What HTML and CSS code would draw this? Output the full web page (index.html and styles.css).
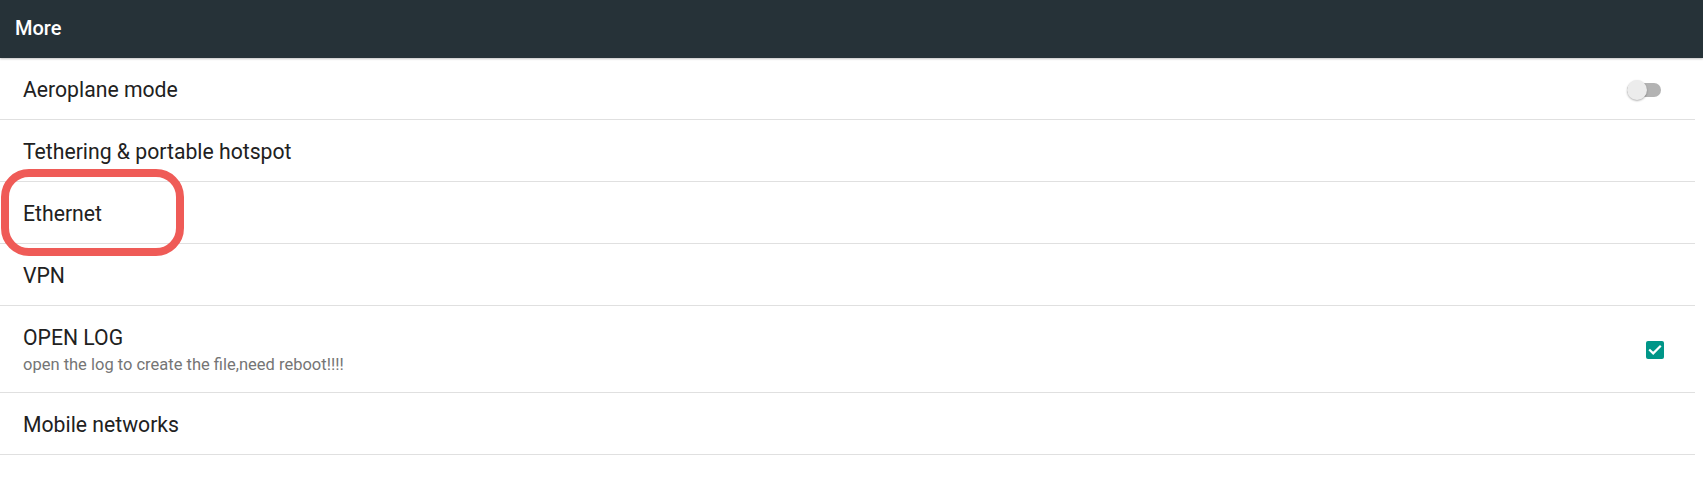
FILE: index.html
```html
<!DOCTYPE html>
<html>
<head>
<meta charset="utf-8">
<link rel="stylesheet" href="styles.css">
</head>
<body>
<header class="appbar"><span class="appbar-title">More</span></header>
<main class="list">
  <div class="row">
    <div class="row-text"><div class="title">Aeroplane mode</div></div>
    <div class="switch"><span class="switch-track"></span><span class="switch-thumb"></span></div>
  </div>
  <div class="row">
    <div class="row-text"><div class="title">Tethering &amp; portable hotspot</div></div>
  </div>
  <div class="row">
    <div class="row-text"><div class="title">Ethernet</div></div>
  </div>
  <div class="row">
    <div class="row-text"><div class="title">VPN</div></div>
  </div>
  <div class="row row-tall">
    <div class="row-text">
      <div class="title">OPEN LOG</div>
      <div class="summary">open the log to create the file,need reboot!!!!</div>
    </div>
    <div class="checkbox">
      <svg viewBox="0 0 18 18" width="18" height="18"><path d="M4 9.3l3.2 3.1L14 5.6" fill="none" stroke="#fff" stroke-width="2.2" stroke-linecap="square"/></svg>
    </div>
  </div>
  <div class="row">
    <div class="row-text"><div class="title">Mobile networks</div></div>
  </div>
</main>
<div class="highlight"></div>
</body>
</html>
```

FILE: styles.css
```css
html, body {
  margin: 0;
  padding: 0;
  background: #ffffff;
}
body {
  position: relative;
  width: 1703px;
  height: 498px;
  overflow: hidden;
  font-family: Roboto, "Noto Sans", "Liberation Sans", sans-serif;
}
.appbar {
  position: relative;
  z-index: 2;
  height: 58px;
  background: #263238;
  display: flex;
  align-items: center;
  padding: 0 0 3px 15px;
  box-sizing: border-box;
  box-shadow: 0 1px 2px rgba(0,0,0,0.25);
}
.appbar-title {
  color: #ffffff;
  font-weight: 500;
  font-size: 20px;
}
.list {
  margin-right: 8px;
}
.row {
  height: 62px;
  box-sizing: border-box;
  border-bottom: 1px solid #e0e0e0;
  display: flex;
  align-items: center;
  justify-content: space-between;
  padding: 2px 31px 0 23px;
}
.row-tall {
  height: 87px;
}
.title {
  font-size: 21.2px;
  color: #212121;
  line-height: 26px;
}
.summary {
  font-size: 16.5px;
  color: #757575;
  line-height: 20px;
  margin-top: 4px;
}
.switch {
  position: relative;
  width: 34px;
  height: 20px;
  margin-right: 3px;
  display: flex;
  align-items: center;
}
.switch-track {
  width: 34px;
  height: 14px;
  border-radius: 7px;
  background: #b3b3b3;
}
.switch-thumb {
  position: absolute;
  left: 0;
  top: 0;
  width: 20px;
  height: 20px;
  border-radius: 50%;
  background: #ececec;
  box-shadow: 0 1px 2px rgba(0,0,0,0.3);
}
.checkbox {
  width: 18px;
  height: 18px;
  border-radius: 2px;
  background: #009688;
  display: flex;
}
.highlight {
  position: absolute;
  left: 1px;
  top: 169px;
  width: 183px;
  height: 87px;
  box-sizing: border-box;
  border: 8px solid #ef5b57;
  border-radius: 28px;
  z-index: 3;
}
```
